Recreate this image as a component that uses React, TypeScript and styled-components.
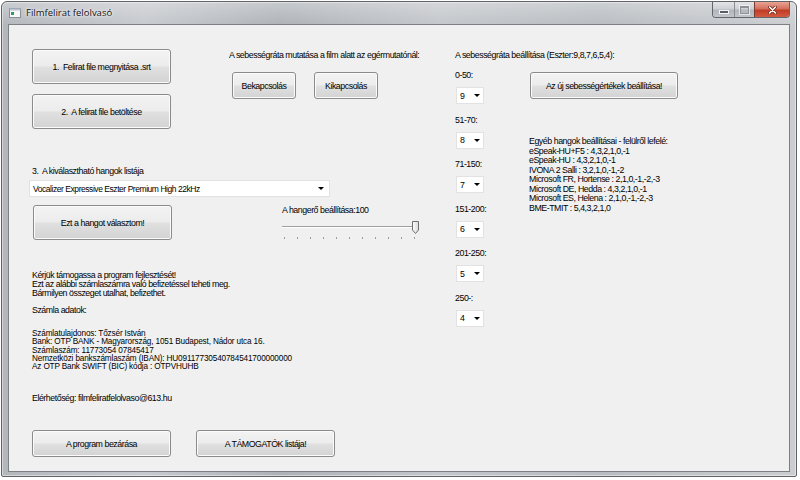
import styled, { createGlobalStyle } from 'styled-components';

const GlobalStyle = createGlobalStyle`
  html, body {
    margin: 0;
    padding: 0;
    background: #ffffff;
  }
  body {
    width: 800px;
    height: 480px;
    overflow: hidden;
    font-family: "Liberation Sans", Arial, sans-serif;
  }
`;

const ui = `"Liberation Sans", Arial, sans-serif`;

// window chrome
const Window = styled.div`
  box-sizing: border-box;
  margin: 1px 0 0 1px;
  width: 796px;
  height: 476px;
  display: flex;
  flex-direction: column;
  padding: 0 6px 4px 6px;
  border: 1px solid #5f6368;
  border-radius: 6px 6px 2px 2px;
  background:
    linear-gradient(to bottom, rgba(255, 255, 255, 0.3), rgba(255, 255, 255, 0) 24px),
    linear-gradient(to right, #b3b7bc 0%, #c6c9cd 18%, #aeb2b7 35%, #c3c6ca 55%, #b8bcc0 75%, #cbcdd0 100%);
  box-shadow: inset 0 0 0 1px rgba(255, 255, 255, 0.45);
`;

const TitleBar = styled.div`
  height: 22px;
  display: flex;
  align-items: flex-start;
`;

const TitleIcon = styled.svg`
  width: 12px;
  height: 10px;
  margin: 6px 0 0 1px;
  flex: none;
`;

const TitleText = styled.span`
  margin: 5px 0 0 5px;
  font-family: "Open Sans", ${ui};
  font-size: 9.5px;
  line-height: 12px;
  color: #111;
  text-shadow: 0 0 4px #ffffff, 0 0 2px #ffffff;
`;

const Captions = styled.div`
  margin-left: auto;
  display: flex;
  height: 15px;
  border: 1px solid #62666b;
  border-top: none;
  border-radius: 0 0 4px 4px;
  overflow: hidden;
`;

const CaptionButton = styled.div<{ $w: number; $close?: boolean }>`
  width: ${({ $w }) => $w}px;
  display: flex;
  align-items: center;
  justify-content: center;
  border-left: ${({ $close }) => ($close ? '1px solid #7a3a30' : '1px solid #8a8e93')};
  background: ${({ $close }) =>
    $close
      ? 'linear-gradient(to bottom, #e8a495 0%, #d4705c 45%, #c23c25 55%, #d35a41 100%)'
      : 'linear-gradient(to bottom, #e3e5e8 0%, #cdd0d4 45%, #b3b7bc 55%, #c2c5c9 100%)'};

  &:first-child {
    border-left: none;
  }
`;

const MinGlyph = styled.span`
  width: 8px;
  height: 2px;
  margin-top: 5px;
  background: #5a5d61;
  border: 1px solid #f4f4f4;
`;

const MaxGlyph = styled.span`
  width: 7px;
  height: 5px;
  border: 1px solid #8d9095;
  border-top-width: 2px;
  box-shadow: 0 0 0 1px rgba(255, 255, 255, 0.6);
`;

const CloseGlyph = styled.svg`
  width: 9px;
  height: 8px;
`;

const Client = styled.div`
  flex: 1;
  box-sizing: border-box;
  display: grid;
  grid-template-columns: 423px 1fr;
  padding: 24px 0 0 23px;
  background: #f0f0f0;
  border: 1px solid #7c8085;
  font-family: ${ui};
  font-size: 8.8px;
  letter-spacing: -0.45px;
  color: #000;
`;

// controls
const Button = styled.button<{ $w: number; $h: number }>`
  box-sizing: border-box;
  width: ${({ $w }) => $w}px;
  height: ${({ $h }) => $h}px;
  padding: 0;
  flex: none;
  border: 1px solid #8b8b8b;
  border-radius: 3px;
  background: linear-gradient(to bottom, #f3f3f3 0%, #ececec 48%, #e0e0e0 52%, #d3d3d3 100%);
  box-shadow: inset 0 0 0 1px #fbfbfb;
  font-family: ${ui};
  font-size: 8.8px;
  letter-spacing: -0.45px;
  color: #000;
  white-space: pre;
`;

const Label = styled.div`
  line-height: 10px;
  white-space: pre;
`;

const Combo = styled.div<{ $w: number }>`
  box-sizing: border-box;
  width: ${({ $w }) => $w}px;
  height: 17px;
  display: flex;
  align-items: center;
  padding-left: 3px;
  background: #ffffff;
  border: 1px solid #e2e2e2;
  line-height: 10px;
`;

const Arrow = styled.span<{ $r: number }>`
  margin-left: auto;
  margin-right: ${({ $r }) => $r}px;
  width: 0;
  height: 0;
  border-left: 3px solid transparent;
  border-right: 3px solid transparent;
  border-top: 3px solid #000;
`;

// left side
const LeftColumn = styled.div`
  display: flex;
  flex-direction: column;
`;

const TopRow = styled.div`
  display: flex;
  gap: 58px;
`;

const FileButtons = styled.div`
  display: flex;
  flex-direction: column;
  gap: 10px;
`;

const ToggleGroup = styled.div`
  padding-top: 1px;
  display: flex;
  flex-direction: column;
  gap: 12px;
`;

const ToggleButtons = styled.div`
  display: flex;
  gap: 18px;
  margin-left: 3px;
`;

const VoiceLabel = styled(Label)`
  margin-top: 37px;
`;

const VoiceCombo = styled(Combo)`
  margin: 4px 0 0 -3px;
  font-size: 8.5px;
`;

const VoiceRow = styled.div`
  display: flex;
  gap: 110px;
  margin: 8px 0 0 1px;
`;

const Volume = styled.div`
  display: flex;
  flex-direction: column;
  gap: 6px;
`;

const Slider = styled.div`
  position: relative;
  width: 136px;
  height: 20px;
`;

const Track = styled.div`
  margin-top: 5px;
  width: 133px;
  height: 1px;
  background: #a0a0a0;
  border-bottom: 1px solid #ffffff;
`;

const Thumb = styled.svg`
  position: absolute;
  left: 130px;
  top: 0;
  width: 7px;
  height: 13px;
`;

const Ticks = styled.div`
  display: flex;
  justify-content: space-between;
  width: 131px;
  margin: 9px 0 0 2px;
`;

const Tick = styled.span`
  width: 1px;
  height: 2px;
  background: #9a9a9a;
`;

const Donation = styled.div<{ $mt: number; $lh: number }>`
  margin-top: ${({ $mt }) => $mt}px;
  line-height: ${({ $lh }) => $lh}px;
  font-size: ${({ $lh }) => Math.min(8.8, $lh)}px;
  letter-spacing: ${({ $lh }) => ($lh < 8.8 ? '-0.15px' : '-0.45px')};
`;

const BottomButtons = styled.div`
  display: flex;
  gap: 25px;
  margin-top: 27px;
`;

// right side
const RightColumn = styled.div`
  display: flex;
  flex-direction: column;
`;

const RightHeading = styled(Label)`
  margin-top: 1px;
`;

const SpeedArea = styled.div`
  display: flex;
  margin-top: 10px;
`;

const SpeedList = styled.div`
  width: 74px;
  display: flex;
  flex-direction: column;
  gap: 10.5px;
`;

const SpeedGroup = styled.div`
  display: flex;
  flex-direction: column;
  gap: 7px;
`;

const SpeedCombo = styled(Combo)`
  margin-left: 1px;
`;

const SpeedSide = styled.div`
  display: flex;
  flex-direction: column;
`;

const SetButton = styled(Button)`
  margin: 2px 0 0 1px;
`;

const OtherVoices = styled.div`
  margin-top: 38px;
  line-height: 9.5px;
`;

const speeds = [
  { range: '0-50:', value: '9' },
  { range: '51-70:', value: '8' },
  { range: '71-150:', value: '7' },
  { range: '151-200:', value: '6' },
  { range: '201-250:', value: '5' },
  { range: '250-:', value: '4' },
];

const otherVoices = [
  'Egyéb hangok beállításai - felülről lefelé:',
  'eSpeak-HU+F5 : 4,3,2,1,0,-1',
  'eSpeak-HU : 4,3,2,1,0,-1',
  'IVONA 2 Salli : 3,2,1,0,-1,-2',
  'Microsoft FR, Hortense : 2,1,0,-1,-2,-3',
  'Microsoft DE, Hedda : 4,3,2,1,0,-1',
  'Microsoft ES, Helena : 2,1,0,-1,-2,-3',
  'BME-TMIT : 5,4,3,2,1,0',
];

export default function App() {
  return (
    <>
      <GlobalStyle />
      <Window>
        <TitleBar>
          <TitleIcon viewBox="0 0 12 10">
            <rect x="0.5" y="0.5" width="11" height="9" fill="#f7f7f7" stroke="#8a8f96" />
            <rect x="0.5" y="0.5" width="11" height="2" fill="#b9c3cf" />
            <rect x="2" y="4" width="3" height="3" fill="#2f9a6a" />
          </TitleIcon>
          <TitleText>Filmfelirat felolvasó</TitleText>
          <Captions>
            <CaptionButton $w={21}>
              <MinGlyph />
            </CaptionButton>
            <CaptionButton $w={19}>
              <MaxGlyph />
            </CaptionButton>
            <CaptionButton $w={34} $close>
              <CloseGlyph viewBox="0 0 9 8">
                <path d="M1.5 1 L7.5 7 M7.5 1 L1.5 7" stroke="#6a2418" strokeWidth="3" strokeLinecap="round" />
                <path d="M1.5 1 L7.5 7 M7.5 1 L1.5 7" stroke="#ffffff" strokeWidth="1.6" strokeLinecap="round" />
              </CloseGlyph>
            </CaptionButton>
          </Captions>
        </TitleBar>

        <Client>
          <LeftColumn>
            <TopRow>
              <FileButtons>
                <Button $w={139} $h={35}>1.  Felirat file megnyitása .srt</Button>
                <Button $w={139} $h={35}>2.  A felirat file betöltése</Button>
              </FileButtons>
              <ToggleGroup>
                <Label>A sebességráta mutatása a film alatt az egérmutatónál:</Label>
                <ToggleButtons>
                  <Button $w={64} $h={27}>Bekapcsolás</Button>
                  <Button $w={64} $h={27}>Kikapcsolás</Button>
                </ToggleButtons>
              </ToggleGroup>
            </TopRow>

            <VoiceLabel>3.  A kiválasztható hangok listája</VoiceLabel>
            <VoiceCombo $w={301}>
              Vocalizer Expressive Eszter Premium High 22kHz
              <Arrow $r={5} />
            </VoiceCombo>

            <VoiceRow>
              <Button $w={139} $h={35}>Ezt a hangot választom!</Button>
              <Volume>
                <Label>A hangerő beállítása:100</Label>
                <Slider>
                  <Track />
                  <Thumb viewBox="0 0 7 13">
                    <defs>
                      <linearGradient id="thumb" x1="0" y1="0" x2="1" y2="0">
                        <stop offset="0" stopColor="#fdfdfd" />
                        <stop offset="1" stopColor="#d9d9d9" />
                      </linearGradient>
                    </defs>
                    <path d="M0.5 0.5 H6.5 V9 L3.5 12.5 L0.5 9 Z" fill="url(#thumb)" stroke="#6f6f6f" />
                  </Thumb>
                  <Ticks>
                    {Array.from({ length: 11 }, (_, i) => (
                      <Tick key={i} />
                    ))}
                  </Ticks>
                </Slider>
              </Volume>
            </VoiceRow>

            <Donation $mt={30} $lh={8.8}>
              Kérjük támogassa a program fejlesztését!
              <br />
              Ezt az alábbi számlaszámra való befizetéssel teheti meg.
              <br />
              Bármilyen összeget utalhat, befizethet.
            </Donation>
            <Donation $mt={9} $lh={8.8}>
              Számla adatok:
            </Donation>
            <Donation $mt={15} $lh={8.2}>
              Számlatulajdonos: Tőzsér István
              <br />
              Bank: OTP BANK - Magyarország, 1051 Budapest, Nádor utca 16.
              <br />
              Számlaszám: 11773054 07845417
              <br />
              Nemzetközi bankszámlaszám (IBAN): HU09117730540784541700000000
              <br />
              Az OTP Bank SWIFT (BIC) kódja : OTPVHUHB
            </Donation>
            <Donation $mt={23} $lh={8.8}>
              Elérhetőség: filmfeliratfelolvaso@613.hu
            </Donation>

            <BottomButtons>
              <Button $w={139} $h={27}>A program bezárása</Button>
              <Button $w={139} $h={27}>A TÁMOGATÓK listája!</Button>
            </BottomButtons>
          </LeftColumn>

          <RightColumn>
            <RightHeading>A sebességráta beállítása (Eszter:9,8,7,6,5,4):</RightHeading>
            <SpeedArea>
              <SpeedList>
                {speeds.map((s) => (
                  <SpeedGroup key={s.range}>
                    <Label>{s.range}</Label>
                    <SpeedCombo $w={28}>
                      {s.value}
                      <Arrow $r={3} />
                    </SpeedCombo>
                  </SpeedGroup>
                ))}
              </SpeedList>
              <SpeedSide>
                <SetButton $w={148} $h={27}>Az új sebességértékek beállítása!</SetButton>
                <OtherVoices>
                  {otherVoices.map((line) => (
                    <div key={line}>{line}</div>
                  ))}
                </OtherVoices>
              </SpeedSide>
            </SpeedArea>
          </RightColumn>
        </Client>
      </Window>
    </>
  );
}
